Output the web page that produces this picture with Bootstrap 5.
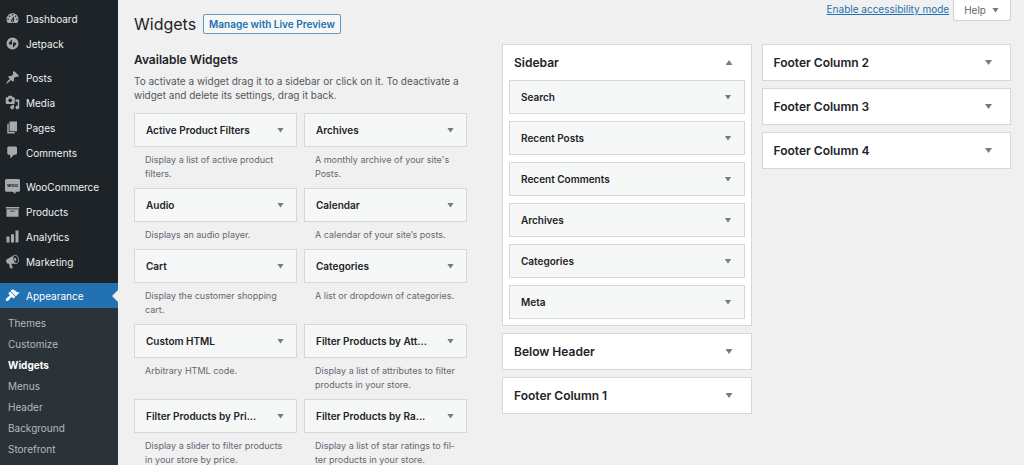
<!DOCTYPE html>
<html lang="en">
<head>
<meta charset="utf-8">
<meta name="viewport" content="width=device-width, initial-scale=1">
<title>Widgets</title>
<link href="https://cdn.jsdelivr.net/npm/bootstrap@5.3.0/dist/css/bootstrap.min.css" rel="stylesheet">
<style>
html { scrollbar-width: none; }
html::-webkit-scrollbar { display: none; }
body { background: #f0f0f0; color: #1d2327; font-family: Inter, "Liberation Sans", sans-serif; font-size: 10px; line-height: 14px; }
.admin-menu { width: 118px; flex: none; background: #1d2327; padding-top: 6px; font-size: 10px; }
.admin-menu a { text-decoration: none; }
.menu-link { height: 25px; padding-left: 5px; gap: 6px; color: #f0f0f1; }
.menu-link svg { width: 15px; height: 15px; fill: #a7aaad; fill-rule: evenodd; flex: none; }
.menu-gap { margin-top: 9px; }
.menu-link.current { background: #2271b1; color: #fff; position: relative; }
.menu-link.current svg { fill: #fff; }
.menu-link.current::after { content: ""; position: absolute; right: 0; top: 7px; border: 6px solid transparent; border-left: 0; border-right-color: #f0f0f0; }
.submenu { background: #2c3338; padding-top: 5px; font-size: 10px; }
.submenu a { display: block; padding-left: 8px; line-height: 21px; color: #b4b9be; }
.submenu a.current { color: #fff; font-weight: 700; }
.page { min-width: 0; padding: 0 13px 0 16px; }
.page-head { height: 34px; margin-bottom: 10px; }
.title-row { padding-top: 14px; gap: 7px; }
.page-title { font-size: 16px; line-height: 20px; font-weight: 400; }
.btn-preview { border: 1px solid #5b98cb; border-radius: 2px; background: #f6f7f7; color: #2271b1; font-size: 10px; line-height: 18px; font-weight: 600; padding: 0 5px; }
.mode-link { color: #2271b1; font-size: 10px; line-height: 19px; }
.help-tab { height: 21px; border: 1px solid #d0d1d4; border-top: 0; border-radius: 0 0 3px 3px; background: #fff; color: #646970; padding: 0 11px 0 10px; gap: 6px; font-size: 10px; }
.arrow { width: 7px; height: 5px; flex: none; background: #787c82; clip-path: polygon(0 0, 100% 0, 50% 100%); }
.arrow.up { clip-path: polygon(50% 0, 100% 100%, 0 100%); }
.work { display: grid; grid-template-columns: 333fr 509fr; column-gap: 35px; }
.section-title { font-size: 12px; line-height: 16px; font-weight: 600; margin: 8px 0 6px; }
.intro { color: #50575e; margin-bottom: 11px; }
.available { display: grid; grid-template-columns: 1fr 1fr; column-gap: 7px; }
.widget-bar { height: 34px; width: 100%; border: 1px solid #d5d7d9; border-radius: 0; background: #f6f7f7; color: #1d2327; font-size: 10px; font-weight: 600; text-align: left; padding: 0 12px 0 11px; }
.widget-note { color: #646970; font-size: 9px; line-height: 14px; padding: 6px 11px 0; margin-bottom: 7px; }
.areas { display: grid; grid-template-columns: 1fr 1fr; column-gap: 10px; align-items: start; }
.stack { display: grid; row-gap: 7px; }
.area { border: 1px solid #d5d7d9; background: #fff; }
.area-bar { height: 35px; width: 100%; border: 0; background: none; color: #1d2327; font-size: 12px; font-weight: 600; text-align: left; padding: 0 18px 0 11px; }
.area .stack { padding: 0 6px 6px; }
</style>
</head>
<body>
<div class="d-flex min-vh-100">
  <nav class="admin-menu d-flex flex-column" aria-label="Main menu">
    <a class="menu-link d-flex align-items-center" href="#"><svg viewBox="0 0 20 20"><path d="M3.76 16h12.48c1.1-1.37 1.76-3.11 1.76-5 0-4.42-3.58-8-8-8s-8 3.58-8 8c0 1.89.66 3.63 1.76 5zM10 4c.55 0 1 .45 1 1s-.45 1-1 1-1-.45-1-1 .45-1 1-1zM6 6c.55 0 1 .45 1 1s-.45 1-1 1-1-.45-1-1 .45-1 1-1zm8 0c.55 0 1 .45 1 1s-.45 1-1 1-1-.45-1-1 .45-1 1-1zm-5.370 5.550L12 7v6c0 1.100-.9 2-2 2s-2-.9-2-2c0-.57.24-1.080.63-1.450zM4 10c.55 0 1 .45 1 1s-.45 1-1 1-1-.45-1-1 .45-1 1-1zm12 0c.55 0 1 .45 1 1s-.45 1-1 1-1-.45-1-1 .45-1 1-1zm-5 3c0-.55-.45-1-1-1s-1 .45-1 1 .45 1 1 1 1-.45 1-1z"/></svg>Dashboard</a>
    <a class="menu-link d-flex align-items-center" href="#"><svg viewBox="0 0 20 20"><path d="M10 2a8 8 0 1 0 0 16a8 8 0 0 0 0-16zM9.300 4.500v7.300l-3.300-.8c-1-.3-1.300-1.100-.8-2zM10.700 15.500V8.200l3.300.8c1 .3 1.300 1.100.8 2z"/></svg>Jetpack</a>
    <a class="menu-link menu-gap d-flex align-items-center" href="#"><svg viewBox="0 0 20 20"><path d="M10.440 3.020l1.820-1.820 6.360 6.350-1.830 1.820c-1.050-.68-2.480-.57-3.410.36l-.75.75c-.92.93-1.040 2.350-.35 3.410l-1.830 1.820-2.410-2.410-2.800 2.790c-.42.42-3.380 2.710-3.800 2.290s1.860-3.390 2.280-3.810l2.790-2.790L4.100 9.360l1.830-1.820c1.050.69 2.480.57 3.400-.36l.75-.75c.93-.92 1.050-2.350.36-3.410z"/></svg>Posts</a>
    <a class="menu-link d-flex align-items-center" href="#"><svg viewBox="0 0 20 20"><path d="M13 11V4c0-.55-.45-1-1-1h-1.670L9 1H5L3.670 3H2c-.55 0-1 .45-1 1v7c0 .55.45 1 1 1h10c.55 0 1-.45 1-1zM7 4.500c1.380 0 2.500 1.120 2.500 2.500S8.380 9.500 7 9.500 4.500 8.380 4.500 7 5.620 4.500 7 4.500zM14 6h5v10.500c0 1.380-1.120 2.500-2.500 2.500S14 17.880 14 16.500s1.120-2.500 2.500-2.500c.17 0 .34.02.5.05V9h-3V6zm-4 8.050V13h2v3.500c0 1.380-1.120 2.500-2.500 2.500S7 17.880 7 16.500 8.120 14 9.500 14c.17 0 .34.02.5.05z"/></svg>Media</a>
    <a class="menu-link d-flex align-items-center" href="#"><svg viewBox="0 0 20 20"><path d="M6 15V2h10v13H6zm-1 1h8v2H3V5h2v11z"/></svg>Pages</a>
    <a class="menu-link d-flex align-items-center" href="#"><svg viewBox="0 0 20 20"><path d="M5 2h9c1.100 0 2 .9 2 2v7c0 1.100-.9 2-2 2h-2l-5 5v-5H5c-1.100 0-2-.9-2-2V4c0-1.100.9-2 2-2z"/></svg>Comments</a>
    <a class="menu-link menu-gap d-flex align-items-center" href="#"><svg viewBox="0 0 20 20"><path d="M2 0h16a2 2 0 0 1 2 2v13a2 2 0 0 1-2 2h-4v3l-4-3H2a2 2 0 0 1-2-2V2a2 2 0 0 1 2-2z"/><text x="10" y="11" text-anchor="middle" font-size="7" font-weight="700" fill="#1d2327" aria-hidden="true">woo</text></svg>WooCommerce</a>
    <a class="menu-link d-flex align-items-center" href="#"><svg viewBox="0 0 20 20"><path d="M19 4v2H1V4h18zM2 7h16v10H2V7zm11 3V9H7v1h6z"/></svg>Products</a>
    <a class="menu-link d-flex align-items-center" href="#"><svg viewBox="0 0 20 20"><path d="M18 18V2h-4v16h4zm-6 0V7H8v11h4zm-6 0v-8H2v8h4z"/></svg>Analytics</a>
    <a class="menu-link d-flex align-items-center" href="#"><svg viewBox="0 0 20 20"><path d="M18.150 5.940c.46 1.620.38 3.220-.02 4.480-.42 1.280-1.260 2.180-2.300 2.480-.16.06-.26.06-.4.06-.06.02-.12.02-.18.02-.06.02-.14.02-.22.02h-6.800l2.220 5.500c.02.14-.06.26-.14.34-.08.1-.24.16-.34.16H6.950c-.1 0-.26-.06-.34-.16-.08-.08-.16-.2-.14-.34l-1-5.500H4.250l-.02-.02c-.5.06-1.080-.18-1.540-.62s-.88-1.080-1.060-1.880c-.24-.8-.2-1.560-.02-2.200.18-.62.58-1.080 1.060-1.300l.02-.02 9-5.400c.1-.06.18-.1.24-.16.06-.04.14-.08.24-.12.16-.08.28-.12.5-.18 1.040-.3 2.240.1 3.220.98s1.840 2.240 2.260 3.860zm-2.580 5.980h-.02c.4-.1.74-.34 1.040-.7.58-.7.86-1.760.86-3.040 0-.64-.1-1.300-.28-1.980-.34-1.360-1.020-2.500-1.780-3.240s-1.680-1.100-2.460-.88c-.82.22-1.400.96-1.700 2-.32 1.040-.28 2.360.06 3.720.38 1.360 1 2.500 1.800 3.240.78.74 1.620 1.100 2.480.88zm-2.540-7.080c.22-.04.42-.02.62.04.38.16.76.48 1.020 1s.42 1.200.42 1.780c0 .3-.04.56-.12.8-.18.48-.44.84-.86.94-.34.1-.8-.06-1.140-.4s-.64-.86-.78-1.500c-.18-.62-.12-1.240.02-1.720s.48-.84.82-.94z"/></svg>Marketing</a>
    <a class="menu-link menu-gap current d-flex align-items-center" href="#"><svg viewBox="0 0 20 20"><path d="M14.480 11.060L7.410 3.990l1.500-1.500c.5-.56 2.300-.47 3.510.32 1.210.8 1.430 1.280 2.910 2.100 1.180.64 2.450 1.260 4.450.85zm-.71.71L6.700 4.700 4.930 6.470c-.39.39-.39 1.020 0 1.410l1.060 1.060c.39.39.39 1.030 0 1.420-.6.6-1.430 1.110-2.210 1.690-.35.26-.7.53-1.010.84C1.430 14.230.4 16.080 1.400 17.070c.99 1 2.840-.03 4.180-1.360.31-.31.58-.66.85-1.020.57-.78 1.080-1.610 1.690-2.210.39-.39 1.020-.39 1.410 0l1.060 1.060c.39.39 1.020.39 1.410 0z"/></svg>Appearance</a>
    <div class="submenu flex-grow-1">
      <a href="#">Themes</a>
      <a href="#">Customize</a>
      <a class="current" href="#" aria-current="page">Widgets</a>
      <a href="#">Menus</a>
      <a href="#">Header</a>
      <a href="#">Background</a>
      <a href="#">Storefront</a>
    </div>
  </nav>

  <main class="page flex-grow-1">
    <header class="page-head d-flex justify-content-between align-items-start">
      <div class="title-row d-flex align-items-center h-100">
        <h1 class="page-title m-0">Widgets</h1>
        <button type="button" class="btn btn-preview">Manage with Live Preview</button>
      </div>
      <div class="d-flex align-items-start gap-1">
        <a class="mode-link" href="#">Enable accessibility mode</a>
        <button type="button" class="help-tab d-flex align-items-center">Help <span class="arrow"></span></button>
      </div>
    </header>

    <div class="work">
      <section>
        <h2 class="section-title">Available Widgets</h2>
        <p class="intro">To activate a widget drag it to a sidebar or click on it. To deactivate a widget and delete its settings, drag it back.</p>
        <div class="available">
          <div><button type="button" class="widget-bar d-flex align-items-center justify-content-between">Active Product Filters<span class="arrow"></span></button><p class="widget-note">Display a list of active product filters.</p></div>
          <div><button type="button" class="widget-bar d-flex align-items-center justify-content-between">Archives<span class="arrow"></span></button><p class="widget-note">A monthly archive of your site's Posts.</p></div>
          <div><button type="button" class="widget-bar d-flex align-items-center justify-content-between">Audio<span class="arrow"></span></button><p class="widget-note">Displays an audio player.</p></div>
          <div><button type="button" class="widget-bar d-flex align-items-center justify-content-between">Calendar<span class="arrow"></span></button><p class="widget-note">A calendar of your site’s posts.</p></div>
          <div><button type="button" class="widget-bar d-flex align-items-center justify-content-between">Cart<span class="arrow"></span></button><p class="widget-note">Display the customer shopping cart.</p></div>
          <div><button type="button" class="widget-bar d-flex align-items-center justify-content-between">Categories<span class="arrow"></span></button><p class="widget-note">A list or dropdown of categories.</p></div>
          <div><button type="button" class="widget-bar d-flex align-items-center justify-content-between">Custom HTML<span class="arrow"></span></button><p class="widget-note">Arbitrary HTML code.</p></div>
          <div><button type="button" class="widget-bar d-flex align-items-center justify-content-between">Filter Products by Att...<span class="arrow"></span></button><p class="widget-note">Display a list of attributes to filter products in your store.</p></div>
          <div><button type="button" class="widget-bar d-flex align-items-center justify-content-between">Filter Products by Pri...<span class="arrow"></span></button><p class="widget-note">Display a slider to filter products in your store by price.</p></div>
          <div><button type="button" class="widget-bar d-flex align-items-center justify-content-between">Filter Products by Ra...<span class="arrow"></span></button><p class="widget-note">Display a list of star ratings to fil&shy;ter products in your store.</p></div>
        </div>
      </section>

      <div class="areas">
        <div class="stack">
          <section class="area">
            <button type="button" class="area-bar d-flex align-items-center justify-content-between" aria-expanded="true">Sidebar<span class="arrow up"></span></button>
            <div class="stack">
              <button type="button" class="widget-bar d-flex align-items-center justify-content-between">Search<span class="arrow"></span></button>
              <button type="button" class="widget-bar d-flex align-items-center justify-content-between">Recent Posts<span class="arrow"></span></button>
              <button type="button" class="widget-bar d-flex align-items-center justify-content-between">Recent Comments<span class="arrow"></span></button>
              <button type="button" class="widget-bar d-flex align-items-center justify-content-between">Archives<span class="arrow"></span></button>
              <button type="button" class="widget-bar d-flex align-items-center justify-content-between">Categories<span class="arrow"></span></button>
              <button type="button" class="widget-bar d-flex align-items-center justify-content-between">Meta<span class="arrow"></span></button>
            </div>
          </section>
          <section class="area"><button type="button" class="area-bar d-flex align-items-center justify-content-between">Below Header<span class="arrow"></span></button></section>
          <section class="area"><button type="button" class="area-bar d-flex align-items-center justify-content-between">Footer Column 1<span class="arrow"></span></button></section>
        </div>
        <div class="stack">
          <section class="area"><button type="button" class="area-bar d-flex align-items-center justify-content-between">Footer Column 2<span class="arrow"></span></button></section>
          <section class="area"><button type="button" class="area-bar d-flex align-items-center justify-content-between">Footer Column 3<span class="arrow"></span></button></section>
          <section class="area"><button type="button" class="area-bar d-flex align-items-center justify-content-between">Footer Column 4<span class="arrow"></span></button></section>
        </div>
      </div>
    </div>
  </main>
</div>
<script src="https://cdn.jsdelivr.net/npm/bootstrap@5.3.0/dist/js/bootstrap.bundle.min.js"></script>
</body>
</html>
